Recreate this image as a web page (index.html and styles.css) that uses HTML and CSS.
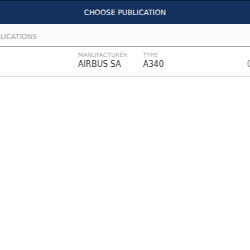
FILE: index.html
```html
<!DOCTYPE html>
<html>
<head>
<meta charset="utf-8">
<link rel="stylesheet" href="styles.css">
</head>
<body>
<div class="page">
  <header class="topbar">CHOOSE PUBLICATION</header>
  <div class="section-title"><span class="title-text">PUBLICATIONS</span></div>
  <div class="row">
    <div class="cell"></div>
    <div class="cell">
      <div class="label">MANUFACTURER</div>
      <div class="value">AIRBUS SA</div>
    </div>
    <div class="cell">
      <div class="label">TYPE</div>
      <div class="value">A340</div>
    </div>
    <div class="cell">
      <div class="label">&nbsp;</div>
      <div class="value faint">0</div>
    </div>
  </div>
</div>
</body>
</html>
```
FILE: styles.css
```css
html, body {
  margin: 0;
  padding: 0;
  background: #ffffff;
}
body {
  width: 250px;
  height: 250px;
  overflow: hidden;
  font-family: "DejaVu Sans", Verdana, sans-serif;
}
.page {
  width: 250px;
  overflow: hidden;
}
.topbar {
  height: 23px;
  border-top: 1px solid #0a1d3c;
  background: #14315d;
  color: #ffffff;
  font-size: 7.3px;
  line-height: 24px;
  text-align: center;
}
.section-title {
  height: 22px;
  background: #fcfcfc;
  border-bottom: 1px solid #a8a8a8;
  white-space: nowrap;
}
.title-text {
  display: inline-block;
  margin-left: -14px;
  font-size: 7px;
  line-height: 21px;
  color: #9a9a9a;
}
.row {
  display: grid;
  grid-template-columns: 78px 65px 104px 20px;
  height: 25px;
  border-bottom: 1px solid #dcdcdc;
  padding-top: 4px;
  white-space: nowrap;
}
.label {
  font-size: 6px;
  line-height: 7px;
  color: #a8a8a8;
}
.value {
  margin-top: 2px;
  font-size: 8px;
  line-height: 10px;
  color: #333333;
}
.value.faint {
  color: #888888;
}
```
